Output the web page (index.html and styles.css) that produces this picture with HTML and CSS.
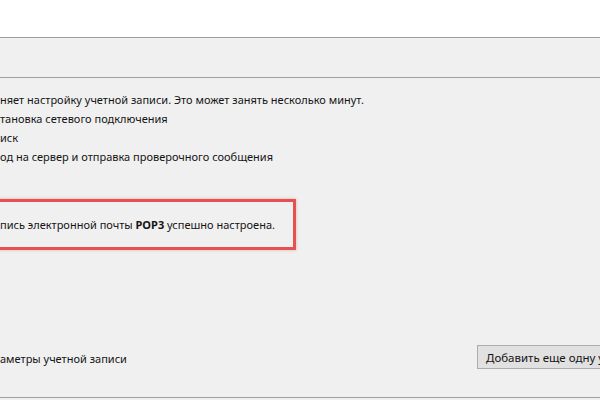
FILE: index.html
```html
<!DOCTYPE html>
<html lang="ru">
<head>
<meta charset="utf-8">
<title>Настройка учетной записи</title>
<link rel="stylesheet" href="styles.css">
</head>
<body>
<div class="window">
  <header class="header"></header>
  <div class="band"></div>
  <main class="content">
    <p class="intro">няет настройку учетной записи. Это может занять несколько минут.</p>
    <ul class="steps">
      <li>тановка сетевого подключения</li>
      <li>иск</li>
      <li>од на сервер и отправка проверочного сообщения</li>
    </ul>
    <div class="success">пись электронной почты <b>POP3</b> успешно настроена.</div>
    <div class="footer">
      <span class="footer-label">аметры учетной записи</span>
      <button class="btn" type="button">Добавить еще одну учетную запись</button>
    </div>
  </main>
</div>
</body>
</html>
```
FILE: styles.css
```css
html, body {
  margin: 0;
  padding: 0;
}
body {
  width: 600px;
  height: 400px;
  overflow: hidden;
  background: #f0f0f0;
  font-family: "Noto Sans", "Open Sans", sans-serif;
  font-size: 11px;
  color: #141414;
}
.window {
  display: flex;
  flex-direction: column;
  height: 400px;
}
.header {
  height: 37px;
  background: #ffffff;
  border-bottom: 1px solid #a0a0a0;
  flex: none;
}
.band {
  height: 39px;
  background: #f0f0f0;
  border-bottom: 1px solid #a0a0a0;
  flex: none;
}
.content {
  flex: 1;
  display: flex;
  flex-direction: column;
  padding-top: 12px;
  border-bottom: 1px solid #a0a0a0;
  margin-bottom: 2px;
  overflow: hidden;
}
.intro {
  margin: 0;
  line-height: 19px;
  white-space: nowrap;
}
.steps {
  list-style: none;
  margin: 0;
  padding: 0;
}
.steps li {
  line-height: 19px;
  white-space: nowrap;
}
.success {
  margin-top: 33px;
  margin-left: -10px;
  width: 293px;
  height: 45px;
  line-height: 45px;
  border: 3px solid #e8504f;
  box-shadow: 0 0 3px rgba(200, 60, 60, 0.35);
  padding-left: 7px;
  white-space: nowrap;
}
.success b {
  font-weight: 700;
}
.footer {
  margin-top: 95px;
  display: flex;
  align-items: center;
  justify-content: space-between;
  height: 24px;
}
.footer-label {
  white-space: nowrap;
  padding-top: 3px;
}
.btn {
  font: inherit;
  font-size: 11.5px;
  color: #141414;
  background: #e1e1e1;
  border: 1px solid #adadad;
  height: 24px;
  width: 150px;
  margin-right: -27px;
  padding: 0 0 0 8px;
  text-align: left;
  white-space: nowrap;
  overflow: hidden;
}
```
